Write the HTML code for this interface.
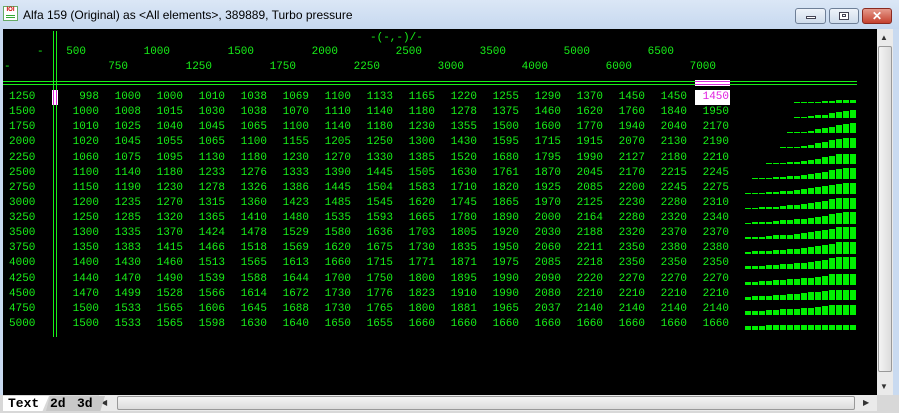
<!DOCTYPE html>
<html><head><meta charset="utf-8"><style>
*{margin:0;padding:0;box-sizing:border-box}
body{width:899px;height:413px;overflow:hidden;background:#c9daf0;font-family:"Liberation Sans",sans-serif;position:relative}
#tb{position:absolute;left:0;top:0;width:899px;height:29px;background:linear-gradient(#dbe7f6,#c6d8ef)}
#title{position:absolute;left:23px;top:8px;font-size:12px;color:#000}
.btn{position:absolute;top:8px;height:16px;border:1px solid #6e7f97;border-radius:3px;background:linear-gradient(#eef3fa,#cfdcec)}
#main{position:absolute;left:3px;top:29px;width:874px;height:366px;background:#000;overflow:hidden}
.t{position:absolute;font-family:"Liberation Mono",monospace;font-size:11px;color:#18f018;line-height:12px;white-space:pre}
.b{position:absolute}
#vs{position:absolute;left:877px;top:29px;width:16px;height:366px;background:#eaeaea}
#hs{position:absolute;left:99px;top:395px;width:778px;height:16px;background:#eaeaea}
#bot{position:absolute;left:0;top:395px;width:899px;height:18px;background:#d8d8d8}
.tab{position:absolute;top:396px;height:15px;font-family:"Liberation Mono",monospace;font-weight:bold;font-size:13px;line-height:15px;color:#000}
</style></head><body>
<div id="tb"></div>
<div style="position:absolute;left:3px;top:6px;width:15px;height:15px;background:#fff;border:1px solid #6a6;"><div style="font-size:6px;color:#c00;font-weight:bold;line-height:7px;text-align:center">IOI</div><div style="height:1px;background:#3a3;margin:1px 2px"></div><div style="height:1px;background:#3a3;margin:1px 2px"></div></div>
<div id="title">Alfa 159 (Original) as &lt;All elements&gt;, 389889, Turbo pressure</div>
<div class="btn" style="left:795px;width:31px"><div style="position:absolute;left:10px;top:7px;width:10px;height:3px;background:#fff;border:1px solid #445"></div></div>
<div class="btn" style="left:829px;width:30px"><div style="position:absolute;left:9px;top:3px;width:10px;height:8px;background:#fff;border:1px solid #445"></div><div style="position:absolute;left:12px;top:5px;width:4px;height:3px;border:1px solid #445"></div></div>
<div class="btn" style="left:862px;width:30px;background:linear-gradient(#e59a8c,#c5412e);border-color:#8a2a20;color:#fff;font-weight:bold;font-size:12px;text-align:center;line-height:14px">✕</div>
<div id="main"></div>
<div id="vs"><div style="position:absolute;left:3px;top:4px;font-size:8px;color:#333">▲</div><div style="position:absolute;left:1px;top:17px;width:14px;height:326px;background:linear-gradient(90deg,#f4f4f4,#dcdcdc);border:1px solid #999;border-radius:2px"></div><div style="position:absolute;left:3px;top:353px;font-size:8px;color:#333">▼</div></div>
<div id="bot"></div>
<div id="hs"><div style="position:absolute;left:2px;top:3px;font-size:8px;color:#333">◀</div><div style="position:absolute;left:18px;top:1px;width:738px;height:14px;background:linear-gradient(#f4f4f4,#dcdcdc);border:1px solid #999;border-radius:2px"></div><div style="position:absolute;left:764px;top:3px;font-size:8px;color:#333">▶</div></div>
<div class="tab" style="left:3px;width:46px;background:#fff;padding-left:5px;clip-path:polygon(0 0,100% 0,86% 100%,0 100%)">Text</div>
<div class="tab" style="left:46px;width:33px;background:#c8c8c8;padding-left:4px;clip-path:polygon(12% 0,100% 0,86% 100%,0 100%)">2d</div>
<div class="tab" style="left:72px;width:33px;background:#c8c8c8;padding-left:5px;clip-path:polygon(12% 0,100% 0,86% 100%,0 100%)">3d</div>
<script>
var M=document.getElementById('main'),h='';
function T(x,y,s,st){h+='<div class="t" style="left:'+(x-3)+'px;top:'+(y-29)+'px;'+(st||'')+'">'+s+'</div>';}
function R(x,y,w,hh,c){h+='<div class="b" style="background:'+(c||'#18f018')+';left:'+(x-3)+'px;top:'+(y-29)+'px;width:'+w+'px;height:'+hh+'px"></div>';}
T(370,32,'-(-,-)/-');
T(37,46,'-');T(4,61,'-');
var ax=[500,750,1000,1250,1500,1750,2000,2250,2500,3000,3500,4000,5000,6000,6500,7000];
ax.forEach(function(v,k){var s=String(v);T(86+42*k-s.length*6.6,k%2?61:46,s);});
R(3,81,854,1);R(3,84,854,1);R(53,31,1,306);R(56,31,1,306);
R(695,80,35,6,'#fff');R(695,81,35,1,'#e020e0');R(695,84,35,1,'#e020e0');
var d=[[1250,"998 1000 1000 1010 1038 1069 1100 1133 1165 1220 1255 1290 1370 1450 1450 1450"],
[1500,"1000 1008 1015 1030 1038 1070 1110 1140 1180 1278 1375 1460 1620 1760 1840 1950"],
[1750,"1010 1025 1040 1045 1065 1100 1140 1180 1230 1355 1500 1600 1770 1940 2040 2170"],
[2000,"1020 1045 1055 1065 1100 1155 1205 1250 1300 1430 1595 1715 1915 2070 2130 2190"],
[2250,"1060 1075 1095 1130 1180 1230 1270 1330 1385 1520 1680 1795 1990 2127 2180 2210"],
[2500,"1100 1140 1180 1233 1276 1333 1390 1445 1505 1630 1761 1870 2045 2170 2215 2245"],
[2750,"1150 1190 1230 1278 1326 1386 1445 1504 1583 1710 1820 1925 2085 2200 2245 2275"],
[3000,"1200 1235 1270 1315 1360 1423 1485 1545 1620 1745 1865 1970 2125 2230 2280 2310"],
[3250,"1250 1285 1320 1365 1410 1480 1535 1593 1665 1780 1890 2000 2164 2280 2320 2340"],
[3500,"1300 1335 1370 1424 1478 1529 1580 1636 1703 1805 1920 2030 2188 2320 2370 2370"],
[3750,"1350 1383 1415 1466 1518 1569 1620 1675 1730 1835 1950 2060 2211 2350 2380 2380"],
[4000,"1400 1430 1460 1513 1565 1613 1660 1715 1771 1871 1975 2085 2218 2350 2350 2350"],
[4250,"1440 1470 1490 1539 1588 1644 1700 1750 1800 1895 1990 2090 2220 2270 2270 2270"],
[4500,"1470 1499 1528 1566 1614 1672 1730 1776 1823 1910 1990 2080 2210 2210 2210 2210"],
[4750,"1500 1533 1565 1606 1645 1688 1730 1765 1800 1881 1965 2037 2140 2140 2140 2140"],
[5000,"1500 1533 1565 1598 1630 1640 1650 1655 1660 1660 1660 1660 1660 1660 1660 1660"]];
d.forEach(function(r,i){var y=91+i*15.13;T(9,y,String(r[0]));
 r[1].split(' ').forEach(function(v,k){var x=99+42*k-v.length*6.6;
  if(i==0&&k==15){R(695,Math.round(y)-1,35,15,'#fff');T(x,y,v,'color:#e020e0');}else T(x,y,v);
  var n=+v;if(n>1110){var hh=Math.max(1,Math.round((n-1110)/105));R(745+7*k,Math.round(y+12-hh),6,hh,'#00f000');}
 });});
R(52,90,6,15,'#fff');R(53,90,1,15,'#e020e0');R(56,90,1,15,'#e020e0');
M.innerHTML=h;
</script>
</body></html>
